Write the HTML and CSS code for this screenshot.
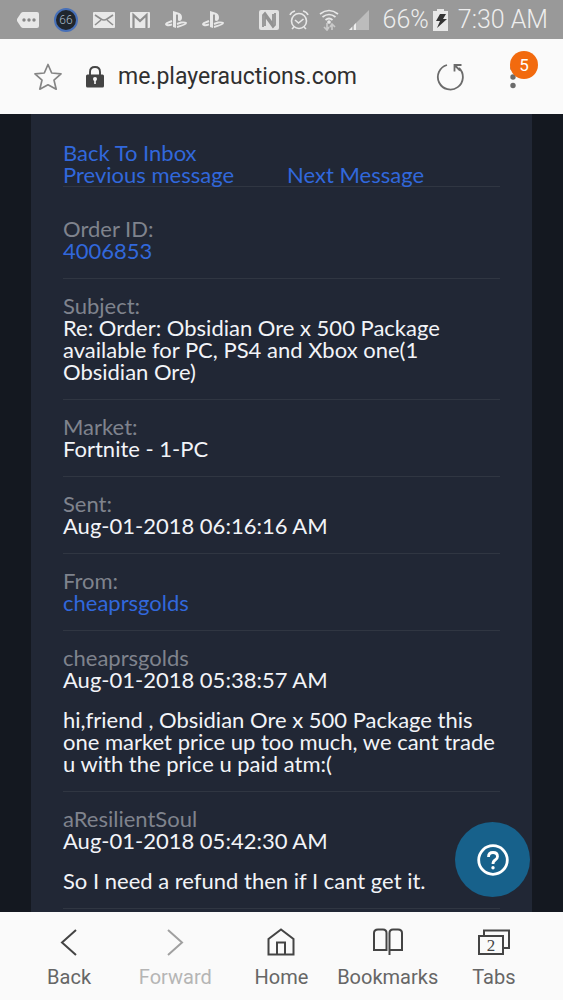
FILE: index.html
```html
<!DOCTYPE html>
<html lang="en">
<head>
<meta charset="utf-8">
<meta name="viewport" content="width=device-width, initial-scale=1">
<title>Message - PlayerAuctions</title>
<link rel="stylesheet" href="styles.css">
</head>
<body>
<div class="status">
  <div class="status-left">
    <svg width="22" height="18" viewBox="0 0 22 18"><path fill="#e8e8e8" d="M6 1h14q2 0 2 2v12q0 2-2 2H6q-1 0-2-1L0 10V8l4-6q1-1 2-1z"/><g fill="#888"><circle cx="7" cy="9" r="1.7"/><circle cx="12" cy="9" r="1.7"/><circle cx="17" cy="9" r="1.7"/></g></svg>
    <span class="level">66</span>
    <svg width="22" height="18" viewBox="0 0 22 18"><rect y="1" width="22" height="16" rx="1" fill="#e8e8e8"/><path d="M2 4l6 4q3 2 6 0l6-4M2 14l6-5M20 14l-6-5" fill="none" stroke="#8d8d8d" stroke-width="1.6"/></svg>
    <svg width="20" height="18" viewBox="0 0 20 18"><rect y="1" width="20" height="16" rx="1" fill="#e8e8e8"/><path d="M3.500 17V4l6.500 6 6.500-6v13" fill="none" stroke="#8d8d8d" stroke-width="2.200"/></svg>
    <svg width="22" height="18" viewBox="0 0 22 18"><path fill="#e8e8e8" d="M8 0l5 1.500q4 1 4 5c0 3-2 4-4 3V4q-1-1.500-2 0v13l-3-1z"/><path d="M7 10l-5 2q-2 1.500 0 2 2 .6 5-.7M12 13l4-1.500q4-.5 5 .5 0 1.500-9 4" fill="none" stroke="#e8e8e8" stroke-width="1.900"/></svg>
    <svg width="22" height="18" viewBox="0 0 22 18"><path fill="#e8e8e8" d="M8 0l5 1.500q4 1 4 5c0 3-2 4-4 3V4q-1-1.500-2 0v13l-3-1z"/><path d="M7 10l-5 2q-2 1.500 0 2 2 .6 5-.7M12 13l4-1.500q4-.5 5 .5 0 1.500-9 4" fill="none" stroke="#e8e8e8" stroke-width="1.900"/></svg>
  </div>
  <div class="status-right">
    <svg width="20" height="20" viewBox="0 0 20 20"><rect width="20" height="20" rx="2" fill="#e2e2e2"/><path d="M4 17V5l2-2 8 11V4M16 3v12l-2 2L6 6v10" fill="none" stroke="#929292" stroke-width="1.800"/></svg>
    <svg width="20" height="20" viewBox="0 0 20 20" fill="none" stroke="#e8e8e8" stroke-width="1.600"><circle cx="10" cy="11" r="7.500"/><path d="M6 10l3.500 3 5-4M1 5q1-3 5-4M19 5q-1-3-5-4M5 17l-2 2M15 17l2 2"/></svg>
    <svg width="20" height="22" viewBox="0 0 20 22" fill="none" stroke="#e8e8e8" stroke-width="1.700"><path d="M1 5q9-7 18 0M3.500 8q6.500-5 13 0M6.500 11q3.500-3 7 0"/><circle cx="10" cy="13" r="1" fill="#e8e8e8"/><path stroke="#c9c9c9" d="M8 14v7M5 18l3 3 2-3M13 21v-6M11 18l2-3 3 3"/></svg>
    <svg width="21" height="22" viewBox="0 0 21 22"><path d="M0 21L20 1v20z" fill="#bcbcbc"/><path d="M0 21l3-3v3zM5 21v-5l2-2v7z" fill="#eee"/></svg>
    <span class="percent">66%</span>
    <svg width="15" height="22" viewBox="0 0 15 22"><path fill="#e8e8e8" d="M4 0h7v2h4v20H0V2h4z"/><path fill="#333" d="M7 5h6l-3 5h4L4 19l3-7H3z"/></svg>
    <span class="clock">7:30 AM</span>
  </div>
</div>
<header class="address">
  <button class="icon-btn" aria-label="Bookmark this page"><svg width="28" height="28" viewBox="0 0 28 28" fill="none" stroke="#858585" stroke-width="1.700" stroke-linejoin="round"><path d="M14 1.500l3.700 8.500 9.300.9-7 6.200 2.200 9.100L14 21.800l-8.200 4.400L8 17.100l-7-6.200 9.300-.9z"/></svg></button>
  <svg class="lock" width="18" height="22" viewBox="0 0 18 22"><path d="M4 10V6q0-5 5-5t5 5v4" fill="none" stroke="#444" stroke-width="1.900"/><rect y="8.500" width="18" height="13" rx="1.500" fill="#444"/><circle cx="9" cy="13" r="2" fill="#fafafa"/><path d="M9 13v5" stroke="#fafafa" stroke-width="1.600"/></svg>
  <span class="url">me.playerauctions.com</span>
  <button class="icon-btn" aria-label="Reload"><svg width="28" height="28" viewBox="0 0 28 28" fill="none" stroke="#6b6b6b" stroke-width="1.800"><path d="M11 2A12.500 12.500 0 1 0 23 5"/><path d="M25.500 2H18.500v6.500M18.500 2l5.500 5.500"/></svg></button>
  <button class="icon-btn more" aria-label="More options, 5 new"><svg width="6" height="24" viewBox="0 0 6 24" fill="#6b6b6b"><circle cx="3" cy="3" r="2.700"/><circle cx="3" cy="12" r="2.700"/><circle cx="3" cy="20.500" r="2.700"/></svg><span class="badge">5</span></button>
</header>
<main class="page">
  <article class="card">
    <nav class="links">
      <a href="#inbox">Back To Inbox</a>
      <div class="pager"><a href="#prev">Previous message</a><a href="#next">Next Message</a></div>
    </nav>
    <section class="row"><h2>Order ID:</h2><a href="#order">4006853</a></section>
    <section class="row"><h2>Subject:</h2><p>Re: Order: Obsidian Ore x 500 Package available for PC, PS4 and Xbox one(1 Obsidian Ore)</p></section>
    <section class="row"><h2>Market:</h2><p>Fortnite - 1-PC</p></section>
    <section class="row"><h2>Sent:</h2><p>Aug-01-2018 06:16:16 AM</p></section>
    <section class="row"><h2>From:</h2><a href="#seller">cheaprsgolds</a></section>
    <section class="row"><h2>cheaprsgolds</h2><p>Aug-01-2018 05:38:57 AM</p><p class="body">hi,friend , Obsidian Ore x 500 Package this one market price up too much, we cant trade u with the price u paid atm:(</p></section>
    <section class="row"><h2>aResilientSoul</h2><p>Aug-01-2018 05:42:30 AM</p><p class="body">So I need a refund then if I cant get it.</p></section>
  </article>
  <button class="help" aria-label="Help"><svg width="32" height="32" viewBox="0 0 32 32" fill="none" stroke="#fff" stroke-width="2.800"><circle cx="16" cy="16" r="14.300"/><path d="M11.500 13q0-4.500 4.500-4.500t4.500 4q0 2-2.300 3.500T16 20"/><circle cx="16" cy="23.700" r="1.700" fill="#fff" stroke="none"/></svg></button>
</main>
<nav class="toolbar">
  <button><svg width="32" height="30" viewBox="0 0 32 30"><path d="M23 3L9 15.500 23 28"/></svg>Back</button>
  <button disabled><svg width="32" height="30" viewBox="0 0 32 30"><path d="M9 3l14 12.500L9 28"/></svg>Forward</button>
  <button><svg width="32" height="30" viewBox="0 0 32 30"><path d="M3.500 27.500V12L16 2.500 28.500 12v15.500zM12 27V15.500h8V27"/></svg>Home</button>
  <button><svg width="32" height="30" viewBox="0 0 32 30"><path d="M2 23V6q0-3.500 4-3.500h5q3.500 0 3.500 3.500v17zM17.500 23V6q0-3.500 3.500-3.500h5q4 0 4 3.500v17zM17.500 23v5"/></svg>Bookmarks</button>
  <button><svg width="34" height="30" viewBox="0 0 34 30"><path d="M7 9V3.500h25V21h-6M2 9h24v18H2z"/><text x="14" y="24" text-anchor="middle">2</text></svg>Tabs</button>
</nav>
</body>
</html>
```
FILE: styles.css
```css
* { box-sizing: border-box; }
body {
  margin: 0;
  height: 100vh;
  display: flex;
  flex-direction: column;
  background: #141820;
  font-family: Roboto, sans-serif;
}
button {
  border: 0;
  padding: 0;
  background: none;
  font: inherit;
  color: inherit;
}
svg { display: block; flex: none; }

.status {
  flex: none;
  height: 39px;
  padding: 0 15px 0 17px;
  display: flex;
  align-items: center;
  justify-content: space-between;
  background: #999;
  color: #eee;
  font-size: 25px;
  font-weight: 300;
}
.status-left { display: flex; align-items: center; gap: 15px; }
.status-right { display: flex; align-items: center; gap: 10px; }
.percent { margin: 0 -6px 0 3px; }
.level {
  width: 24px;
  height: 24px;
  border: 2px solid #4770b8;
  border-radius: 50%;
  background: #20262d;
  color: #a9bac8;
  font-size: 12px;
  line-height: 20px;
  text-align: center;
}

.address {
  flex: none;
  height: 75px;
  padding: 0 47px 0 34px;
  display: flex;
  align-items: center;
  background: #fafafa;
  color: #303030;
}
.lock { margin: 0 14px 0 24px; }
.url { flex: 1; font-size: 23px; }
.icon-btn { position: relative; }
.more { margin-left: 46px; }
.badge {
  position: absolute;
  left: 0;
  top: -14px;
  width: 28px;
  height: 28px;
  border-radius: 50%;
  background: #f26a0e;
  color: #fff;
  font-size: 17px;
  line-height: 28px;
  text-align: center;
}

.page {
  position: relative;
  flex: 1;
  min-height: 0;
  overflow: hidden;
  padding: 0 31px;
}
.card {
  min-height: 100%;
  padding: 28px 32px 0;
  background: #212735;
  color: #f2f4f8;
  font-family: Lato, sans-serif;
  font-size: 22px;
  line-height: 22px;
}
.card a { color: #3168dc; text-decoration: none; }
.links { border-bottom: 1px solid #303642; margin-bottom: 15px; }
.pager { display: flex; gap: 53px; }
.row { padding: 16px 0; border-bottom: 1px solid #303642; }
.row h2 { margin: 0; font: inherit; color: #7f838d; }
.row p { margin: 0; }
.row .body { margin-top: 18px; }
.help {
  position: absolute;
  right: 33px;
  bottom: 15px;
  width: 75px;
  height: 75px;
  border-radius: 50%;
  background: #17618b;
  display: grid;
  place-items: center;
}

.toolbar {
  flex: none;
  height: 88px;
  padding: 4px 16px 0;
  display: grid;
  grid-template-columns: repeat(5, 1fr);
  background: #fafafa;
  color: #666;
  font-size: 20px;
}
.toolbar button {
  display: flex;
  flex-direction: column;
  align-items: center;
  justify-content: center;
  gap: 8px;
}
.toolbar svg { fill: none; stroke: #444; stroke-width: 2; }
.toolbar text { fill: #444; stroke: none; font: 17px "Liberation Serif", serif; }
.toolbar button:disabled { color: #b5b5b5; }
.toolbar button:disabled svg { stroke: #a0a0a0; }
```
